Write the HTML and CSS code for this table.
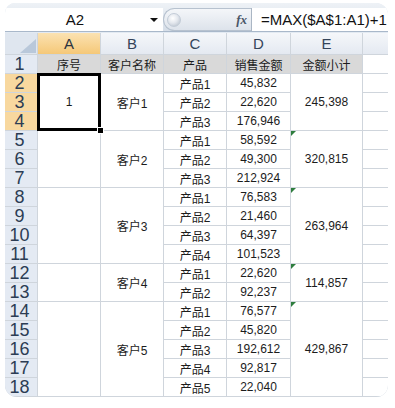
FILE: index.html
```html
<!DOCTYPE html>
<html>
<head>
<meta charset="utf-8">
<link rel="stylesheet" href="styles.css">
</head>
<body>
<div class="frame">
  <div class="fbar">
    <div class="namebox"><span class="name">A2</span><span class="dd"></span></div>
    <div class="fxzone"><span class="knob"></span><span class="fx">fx</span></div>
    <div class="formula">=MAX($A$1:A1)+1</div>
  </div>
  <div class="sheet">
    <div class="corner"><svg width="16" height="14" viewBox="0 0 16 14"><polygon points="0,14 16,0 16,14" fill="#b9c8da"/></svg></div>
    <div class="ch sel">A</div><div class="ch">B</div><div class="ch">C</div><div class="ch">D</div><div class="ch">E</div><div class="ch"></div>

    <div class="rh">1</div>
    <div class="c g">序号</div><div class="c g">客户名称</div><div class="c g">产品</div><div class="c g">销售金额</div><div class="c g">金额小计</div><div class="c f"></div>

    <div class="rh hl">2</div>
    <div class="c s3 selbox">1</div><div class="c s3">客户1</div><div class="c">产品1</div><div class="c">45,832</div><div class="c s3">245,398</div><div class="c f"></div>
    <div class="rh hl">3</div>
    <div class="c">产品2</div><div class="c">22,620</div><div class="c f"></div>
    <div class="rh hl">4</div>
    <div class="c">产品3</div><div class="c">176,946</div><div class="c f"></div>

    <div class="rh">5</div>
    <div class="c s3"></div><div class="c s3">客户2</div><div class="c">产品1</div><div class="c">58,592</div><div class="c s3 err">320,815</div><div class="c f"></div>
    <div class="rh">6</div>
    <div class="c">产品2</div><div class="c">49,300</div><div class="c f"></div>
    <div class="rh">7</div>
    <div class="c">产品3</div><div class="c">212,924</div><div class="c f"></div>

    <div class="rh">8</div>
    <div class="c s4"></div><div class="c s4">客户3</div><div class="c">产品1</div><div class="c">76,583</div><div class="c s4 err">263,964</div><div class="c f"></div>
    <div class="rh">9</div>
    <div class="c">产品2</div><div class="c">21,460</div><div class="c f"></div>
    <div class="rh">10</div>
    <div class="c">产品3</div><div class="c">64,397</div><div class="c f"></div>
    <div class="rh">11</div>
    <div class="c">产品4</div><div class="c">101,523</div><div class="c f"></div>

    <div class="rh">12</div>
    <div class="c s2"></div><div class="c s2">客户4</div><div class="c">产品1</div><div class="c">22,620</div><div class="c s2 err">114,857</div><div class="c f"></div>
    <div class="rh">13</div>
    <div class="c">产品2</div><div class="c">92,237</div><div class="c f"></div>

    <div class="rh">14</div>
    <div class="c s5"></div><div class="c s5">客户5</div><div class="c">产品1</div><div class="c">76,577</div><div class="c s5 err">429,867</div><div class="c f"></div>
    <div class="rh">15</div>
    <div class="c">产品2</div><div class="c">45,820</div><div class="c f"></div>
    <div class="rh">16</div>
    <div class="c">产品3</div><div class="c">192,612</div><div class="c f"></div>
    <div class="rh">17</div>
    <div class="c">产品4</div><div class="c">92,817</div><div class="c f"></div>
    <div class="rh">18</div>
    <div class="c">产品5</div><div class="c">22,040</div><div class="c f"></div>
  </div>
</div>
</body>
</html>
```

FILE: styles.css
```css
html, body {
  margin: 0;
  padding: 0;
  background: #ffffff;
}
body {
  width: 395px;
  height: 408px;
  overflow: hidden;
}
.frame {
  margin: 3px 0 0 5px;
  width: 383px;
  height: 394px;
  border-radius: 10px 12px 12px 12px;
  overflow: hidden;
  background: #e3eaf2;
}
.fbar {
  display: flex;
  height: 23px;
  padding-top: 5px;
  background: linear-gradient(#eef2f6, #d6dee8);
  border-bottom: 1px solid #a9b8ca;
}
.namebox {
  width: 158px;
  display: flex;
  align-items: center;
  background: #ffffff;
}
.name {
  width: 140px;
  text-align: center;
  font: 15px "Liberation Sans", sans-serif;
  color: #111;
}
.dd {
  width: 0;
  height: 0;
  margin-left: 5px;
  border-left: 4px solid transparent;
  border-right: 4px solid transparent;
  border-top: 4px solid #111;
}
.fxzone {
  width: 88px;
  display: flex;
  align-items: center;
  justify-content: space-between;
  box-sizing: border-box;
  padding: 0 4px 0 3px;
  border: 1px solid #b7c2cf;
  border-right: none;
  border-radius: 12px 0 0 12px;
  background: linear-gradient(#f4f6f9, #dde3eb);
}
.knob {
  width: 12px;
  height: 12px;
  border-radius: 50%;
  background: radial-gradient(circle at 40% 35%, #ffffff 0, #e4e8ee 45%, #aeb9c6 100%);
  border: 1px solid #c3ccd7;
}
.fx {
  font: italic bold 13px "Liberation Serif", serif;
  color: #4a5668;
}
.formula {
  flex: 1;
  display: flex;
  align-items: center;
  padding-left: 9px;
  background: #ffffff;
  border-left: 1px solid #aab6c4;
  font: 15px "Liberation Sans", sans-serif;
  color: #111;
}
.sheet {
  margin-top: 1px;
  padding-bottom: 1px;
  display: grid;
  grid-template-columns: 32px 62px 62px 62px 63px 71px 25px;
  grid-template-rows: 21px repeat(18, 18px);
  gap: 1px;
  background: #cfd5dc;
}
.corner {
  background: #dfe6ef;
  display: flex;
  align-items: flex-end;
  justify-content: flex-end;
  padding: 0 1px 1px 0;
}
.corner svg {
  display: block;
}
.ch {
  background: linear-gradient(#f5f7fa, #e4e9f1);
  display: flex;
  align-items: center;
  justify-content: center;
  font: 15px "Liberation Sans", sans-serif;
  color: #34445a;
}
.ch.sel {
  background: linear-gradient(#fbe2b2, #f5c878);
  color: #2c3440;
}
.rh {
  background: #e4eaf3;
  display: flex;
  align-items: center;
  justify-content: center;
  padding-right: 3px;
  font: 18px "Liberation Sans", sans-serif;
  color: #2c3d54;
  line-height: 18px;
}
.rh.hl {
  background: #f8d89f;
}
.c {
  background: #ffffff;
  display: flex;
  align-items: center;
  justify-content: center;
  font: 12px "Liberation Sans", "Noto Sans CJK SC", sans-serif;
  color: #1c1c1c;
  white-space: nowrap;
}
.c.g {
  background: #d9d9d9;
  font-family: "Noto Sans CJK SC", sans-serif;
}
.s2 { grid-row: span 2; }
.s3 { grid-row: span 3; }
.s4 { grid-row: span 4; }
.s5 { grid-row: span 5; }
.selbox {
  position: relative;
  z-index: 2;
  outline: 3px solid #000;
  outline-offset: -2px;
}
.selbox::after {
  content: "";
  position: absolute;
  right: -4px;
  bottom: -4px;
  width: 5px;
  height: 5px;
  background: #000;
  border: 1px solid #fff;
}
.err {
  position: relative;
}
.err::before {
  content: "";
  position: absolute;
  left: 0;
  top: 0;
  border-top: 5px solid #2e7d3e;
  border-right: 5px solid transparent;
}
.f {
  background: #ffffff;
}
```
